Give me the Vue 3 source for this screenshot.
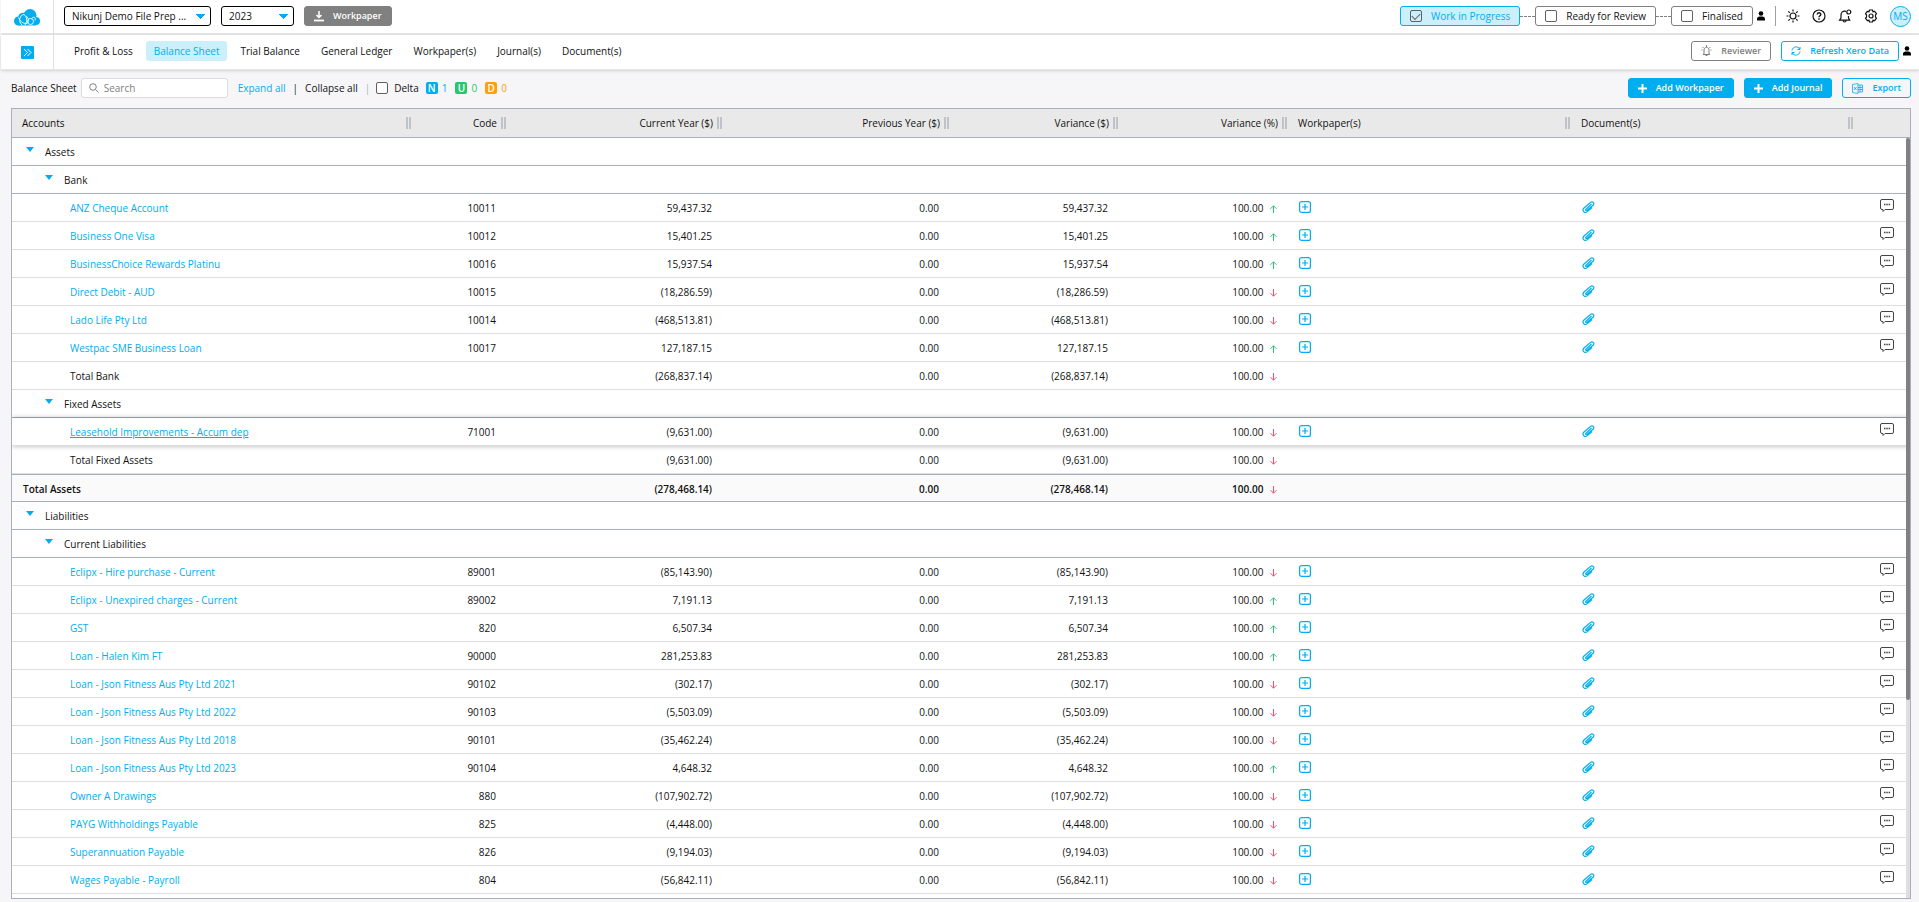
<template>
  <div class="page">
    <header class="bar top-bar">
      <a class="logo" href="#" aria-label="Home">
        <svg width="26" height="17" viewBox="0 0 26 17">
          <circle cx="4.500" cy="12" r="4.500" fill="#00aeef" />
          <circle cx="9" cy="8.500" r="4.800" fill="#00aeef" />
          <circle cx="16" cy="6.500" r="6.500" fill="#00aeef" />
          <circle cx="22" cy="12" r="4" fill="#00aeef" />
          <rect x="4.500" y="8" width="17.500" height="8.500" fill="#00aeef" />
          <g fill="none" stroke="#fff" stroke-width="0.900">
            <path d="M4.500 8.500c1 3 4.500 6.500 8 6 2.500-.5 3-5-.5-7.500" />
            <path d="M8.500 16.500c-5-4-2.500-11 1.500-11 3 2 3.500 7 1 10.500" />
            <circle cx="16.500" cy="12.500" r="3" />
            <path d="M17.500 9.500c2.500-2.500 4.500-1 3.500 2" />
          </g>
        </svg>
      </a>
      <div class="bar-left">
        <select v-model="file" class="picker picker-file" aria-label="File">
          <option>Nikunj Demo File Prep ...</option>
        </select>
        <select v-model="year" class="picker picker-year" aria-label="Year">
          <option>2023</option>
        </select>
        <button class="btn btn-gray" type="button">
          <svg width="10" height="11" viewBox="0 0 10 11" fill="none" stroke="currentColor">
            <path d="M5 0v6M2.500 4L5 6.500 7.500 4" stroke-width="1.500" />
            <path d="M0 9.500h10" stroke-width="1.800" />
          </svg>
          Workpaper
        </button>
      </div>
      <div class="bar-right">
        <div class="steps">
          <template v-for="(step, i) in steps" :key="step.label">
            <span v-if="i" class="dash"></span>
            <label class="step" :class="{ active: step.done }">
              <input v-model="step.done" class="tick" type="checkbox" />
              {{ step.label }}
            </label>
          </template>
        </div>
        <svg class="person" width="8" height="10" viewBox="0 0 8 10">
          <circle cx="4" cy="2.500" r="2.300" />
          <path d="M0 9.500V8c0-2 1.500-2.500 4-2.500S8 6 8 8v1.500z" />
        </svg>
        <div class="tools">
          <button class="icon-btn" type="button" aria-label="Theme">
            <svg width="14" height="14" viewBox="0 0 14 14" fill="none" stroke="currentColor" stroke-width="1.200">
              <circle cx="7" cy="7" r="3" />
              <path d="M7 .5v2M7 11.500v2M.5 7h2M11.500 7h2M2.400 2.400l1.400 1.400M10.200 10.200l1.400 1.400M2.400 11.600l1.400-1.400M10.200 3.800l1.400-1.400" />
            </svg>
          </button>
          <button class="icon-btn" type="button" aria-label="Help">
            <svg width="14" height="14" viewBox="0 0 14 14" fill="none" stroke="currentColor">
              <circle cx="7" cy="7" r="6" stroke-width="1.200" />
              <path d="M5.200 5.600c0-2.400 3.600-2.400 3.600-.1C8.800 6.800 7 6.800 7 8.300M7 9.300v1.500" stroke-width="1.400" />
            </svg>
          </button>
          <button class="icon-btn" type="button" aria-label="Notifications">
            <svg width="14" height="14" viewBox="0 0 14 14" fill="none" stroke="currentColor" stroke-width="1.200">
              <path d="M8 2.300C4.800 1.500 3 3.500 3 6v3l-1.500 2.200h10.200L10.500 9V7M5 11.500c.4 2 2.800 2 3.200 0" />
              <circle cx="10.800" cy="3" r="2" />
            </svg>
          </button>
          <button class="icon-btn" type="button" aria-label="Settings">
            <svg width="14" height="14" viewBox="0 0 14 14" fill="none" stroke="currentColor" stroke-width="1.200">
              <path d="M5.500 1h3l.5 1.700 1.700-.4 1.800 2.400L11.500 6v2l1 1.300-1.800 2.400-1.700-.4L8.500 13h-3L5 11.300l-1.700.4-1.800-2.400 1-1.300V6l-1-1.300 1.800-2.400 1.700.4z" />
              <circle cx="7" cy="7" r="2" />
            </svg>
          </button>
          <button class="avatar" type="button">MS</button>
        </div>
      </div>
    </header>

    <nav class="bar nav-bar">
      <div class="logo">
        <button class="expand" type="button" aria-label="Open menu">
          <svg width="9" height="9" viewBox="0 0 9 9" fill="none" stroke="#fff">
            <path d="M1 1l3.500 3.500L1 8M4.500 1L8 4.500 4.500 8" />
          </svg>
        </button>
      </div>
      <div class="tabs">
        <a v-for="tab in tabs" :key="tab" href="#" class="tab" :class="{ active: tab === 'Balance Sheet' }">{{ tab }}</a>
      </div>
      <div class="bar-right">
        <button class="btn btn-outline-gray" type="button">
          <svg width="11" height="12" viewBox="0 0 11 12" fill="none" stroke="currentColor">
            <path d="M3 9V5c0-3.500 5-3.500 5 0v4l1 .5H2zM4.500 10.500h2M5.500 0v2M.5 5h1M9.500 5h1M1.500 2l1 1M9.500 2l-1 1" />
          </svg>
          Reviewer
        </button>
        <button class="btn btn-outline refresh" type="button">
          <svg width="10" height="10" viewBox="0 0 10 10" fill="none" stroke="currentColor">
            <path d="M1 4.500C1.500.5 7-.5 8.800 3.200M9 1v2.500H6.500M9 5.500C8.500 9.500 3 10.500 1.200 6.800M1 9V6.500h2.500" />
          </svg>
          Refresh Xero Data
        </button>
        <svg class="person" width="8" height="10" viewBox="0 0 8 10">
          <circle cx="4" cy="2.500" r="2.300" />
          <path d="M0 9.500V8c0-2 1.500-2.500 4-2.500S8 6 8 8v1.500z" />
        </svg>
      </div>
    </nav>

    <main class="content">
      <div class="toolbar">
        <h1 class="title">Balance Sheet</h1>
        <label class="search">
          <svg width="10" height="10" viewBox="0 0 10 10" fill="none" stroke="#808080">
            <circle cx="4" cy="4" r="3.300" />
            <path d="M6.500 6.500L9.500 9.500" />
          </svg>
          <input v-model="search" type="text" placeholder="Search" aria-label="Search" />
        </label>
        <div class="links">
          <a class="link" href="#">Expand all</a>
          <span>|</span>
          <a class="dark" href="#">Collapse all</a>
          <span class="pale">|</span>
        </div>
        <label class="delta"><input v-model="delta" class="tick" type="checkbox" />Delta</label>
        <div class="counts">
          <span v-for="c in counts" :key="c.key" class="count" :class="c.cls"><b>{{ c.key }}</b>{{ c.value }}</span>
        </div>
        <div class="actions">
          <button v-for="a in ['Add Workpaper', 'Add Journal']" :key="a" class="btn btn-blue" type="button">
            <svg width="9" height="9" viewBox="0 0 9 9" stroke="currentColor" stroke-width="2">
              <path d="M4.500 0v9M0 4.500h9" />
            </svg>
            {{ a }}
          </button>
          <button class="btn btn-outline" type="button">
            <svg width="11" height="11" viewBox="0 0 11 11" fill="none" stroke="currentColor">
              <path d="M.5 1.500L6 .5v10l-5.500-1zM6 2h4.500v7H6M2 4l2.500 3M4.500 4L2 7M8 2v7M6 4.500h4.500M6 6.500h4.500" stroke-width="0.800" />
            </svg>
            Export
          </button>
        </div>
      </div>

      <div class="grid">
        <div class="scroller">
          <table>
            <colgroup>
              <col v-for="c in columns" :key="c.label" :class="c.col" />
            </colgroup>
            <thead>
              <tr>
                <th v-for="c in columns" :key="c.label" :class="{ num: c.num }" scope="col">
                  {{ c.label }}<i v-if="c.label" class="handle"></i>
                </th>
              </tr>
            </thead>
            <tbody>
              <tr v-for="row in rows" :key="row.name" :class="row.type">
                <td v-if="row.type === 'group' || row.type === 'subgroup'" colspan="9">
                  <button class="toggle" type="button"><i class="caret"></i>{{ row.name }}</button>
                </td>
                <template v-else>
                  <td class="name">
                    <a v-if="row.code" class="link" href="#">{{ row.name }}</a>
                    <template v-else>{{ row.name }}</template>
                  </td>
                  <td class="num">{{ row.code }}</td>
                  <td class="num">{{ row.amount }}</td>
                  <td class="num">0.00</td>
                  <td class="num">{{ row.amount }}</td>
                  <td class="num">
                    100.00
                    <svg class="arrow" :class="{ down: row.down }" width="7" height="8" viewBox="0 0 7 8" fill="none" stroke="currentColor">
                      <path d="M3.500 8V.8M.5 3.800l3-3 3 3" />
                    </svg>
                  </td>
                  <td class="icons">
                    <button v-if="row.code" class="icon-btn blue" type="button" aria-label="Add workpaper">
                      <svg width="12" height="12" viewBox="0 0 12 12" fill="none" stroke="currentColor" stroke-width="1.200">
                        <rect x=".6" y=".6" width="10.800" height="10.800" rx="2" />
                        <path d="M6 3v6M3 6h6" />
                      </svg>
                    </button>
                  </td>
                  <td class="icons">
                    <button v-if="row.code" class="icon-btn blue" type="button" aria-label="Attach document">
                      <svg width="13" height="12" viewBox="0 0 13 12" fill="none" stroke="currentColor" stroke-width="1.200">
                        <path d="M9.500 3L4 8.200c-.8 1 .3 1.800 1.200 1.100L11.300 4c1.800-2-.8-4.200-2.800-2.600L2 7c-2.600 2.700.6 5.700 3.300 3.600L10 6.500" />
                      </svg>
                    </button>
                  </td>
                  <td class="comment">
                    <button v-if="row.code" class="icon-btn" type="button" aria-label="Comments">
                      <svg width="14" height="13" viewBox="0 0 14 13" fill="none" stroke="#444">
                        <path d="M2 .5h10q1.500 0 1.500 1.500v7q0 1.500-1.500 1.500H5L3 12.500v-2H2Q.5 10.500.5 9V2Q.5.5 2 .5z" />
                        <path d="M4 5.500h1.500M6.300 5.500h1.500M8.600 5.500h1.500" stroke-width="1.300" />
                      </svg>
                    </button>
                  </td>
                </template>
              </tr>
            </tbody>
          </table>
        </div>
        <div class="track"><div class="thumb"></div></div>
      </div>
    </main>
  </div>
</template>

<script setup>
import { ref } from 'vue';

const file = ref('Nikunj Demo File Prep ...');
const year = ref('2023');
const search = ref('');
const delta = ref(false);

const steps = ref([
  { label: 'Work in Progress', done: true },
  { label: 'Ready for Review', done: false },
  { label: 'Finalised', done: false },
]);

const tabs = [
  'Profit & Loss',
  'Balance Sheet',
  'Trial Balance',
  'General Ledger',
  'Workpaper(s)',
  'Journal(s)',
  'Document(s)',
];

const counts = [
  { key: 'N', value: 1, cls: 'new' },
  { key: 'U', value: 0, cls: 'updated' },
  { key: 'D', value: 0, cls: 'deleted' },
];

const columns = [
  { label: 'Accounts', col: 'c-name' },
  { label: 'Code', col: 'c-code', num: true },
  { label: 'Current Year ($)', col: 'c-current', num: true },
  { label: 'Previous Year ($)', col: 'c-previous', num: true },
  { label: 'Variance ($)', col: 'c-variance', num: true },
  { label: 'Variance (%)', col: 'c-variance', num: true },
  { label: 'Workpaper(s)', col: 'c-files' },
  { label: 'Document(s)', col: 'c-files' },
  { label: '', col: 'c-comment' },
];

const group = (name) => ({ type: 'group', name });
const subgroup = (name) => ({ type: 'subgroup', name });
const account = (name, code, amount, down, type = 'account') => ({ type, name, code, amount, down });
const total = (name, amount, type = 'total') => ({ type, name, amount, down: true });

const rows = [
  group('Assets'),
  subgroup('Bank'),
  account('ANZ Cheque Account', '10011', '59,437.32', false),
  account('Business One Visa', '10012', '15,401.25', false),
  account('BusinessChoice Rewards Platinu', '10016', '15,937.54', false),
  account('Direct Debit - AUD', '10015', '(18,286.59)', true),
  account('Lado Life Pty Ltd', '10014', '(468,513.81)', true),
  account('Westpac SME Business Loan', '10017', '127,187.15', false),
  total('Total Bank', '(268,837.14)'),
  subgroup('Fixed Assets'),
  account('Leasehold Improvements - Accum dep', '71001', '(9,631.00)', true, 'account hovered'),
  total('Total Fixed Assets', '(9,631.00)'),
  total('Total Assets', '(278,468.14)', 'grand'),
  group('Liabilities'),
  subgroup('Current Liabilities'),
  account('Eclipx - Hire purchase - Current', '89001', '(85,143.90)', true),
  account('Eclipx - Unexpired charges - Current', '89002', '7,191.13', false),
  account('GST', '820', '6,507.34', false),
  account('Loan - Halen Kim FT', '90000', '281,253.83', false),
  account('Loan - Json Fitness Aus Pty Ltd 2021', '90102', '(302.17)', true),
  account('Loan - Json Fitness Aus Pty Ltd 2022', '90103', '(5,503.09)', true),
  account('Loan - Json Fitness Aus Pty Ltd 2018', '90101', '(35,462.24)', true),
  account('Loan - Json Fitness Aus Pty Ltd 2023', '90104', '4,648.32', false),
  account('Owner A Drawings', '880', '(107,902.72)', true),
  account('PAYG Withholdings Payable', '825', '(4,448.00)', true),
  account('Superannuation Payable', '826', '(9,194.03)', true),
  account('Wages Payable - Payroll', '804', '(56,842.11)', true),
];
</script>

<style>
body {
  background: #f6f6f9;
}
</style>

<style scoped>
.page {
  display: flex;
  flex-direction: column;
  height: 100vh;
  font: 10px/14px 'Open Sans', 'Noto Sans', sans-serif;
  color: #111;
}

.page * {
  box-sizing: border-box;
}

button,
input,
select {
  font: inherit;
  color: inherit;
}

button {
  padding: 0;
  border: 0;
  background: none;
  cursor: pointer;
}

a {
  color: inherit;
  text-decoration: none;
}

svg {
  display: block;
  flex: none;
}

.bar {
  display: flex;
  align-items: center;
  flex: none;
  height: 35px;
  margin-left: 1px;
  padding: 0 8px 1px 0;
  background: #fff;
  border-bottom: 2px solid #e6e6e6;
}

.nav-bar {
  padding-bottom: 2px;
  border-bottom-width: 1px;
  box-shadow: 0 1px 3px rgba(0, 0, 0, 0.15);
}

.logo {
  display: flex;
  align-items: center;
  justify-content: center;
  align-self: stretch;
  width: 53px;
  margin-bottom: -2px;
  border-right: 1px solid #e0e0e0;
}

.bar-left {
  display: flex;
  gap: 10px;
  margin-left: 10px;
}

.bar-right {
  display: flex;
  align-items: center;
  margin-left: auto;
}

.picker {
  height: 20px;
  padding: 0 7px;
  border: 1px solid #000;
  border-radius: 3px;
  appearance: none;
  background: #fff conic-gradient(from -45deg at 50% 100%, #00aeef 90deg, transparent 0) no-repeat right 5px center / 9px 5px;
}

.picker-file {
  width: 147px;
}

.picker-year {
  width: 73px;
}

.btn {
  display: flex;
  align-items: center;
  gap: 9px;
  height: 20px;
  padding: 0 9px;
  border: 1px solid currentColor;
  border-radius: 3px;
  font-size: 9px;
  font-weight: 600;
  white-space: nowrap;
}

.btn-gray {
  background: #808080;
  border-color: #808080;
  color: #fff;
}

.btn-blue {
  background: #00aeef;
  border-color: #00aeef;
  color: #fff;
}

.btn-outline {
  color: #00aeef;
}

.btn-outline-gray {
  color: #808080;
}

.refresh {
  margin: 0 4px 0 10px;
}

.steps {
  display: flex;
  align-items: center;
  margin-right: 4px;
}

.step {
  display: flex;
  align-items: center;
  gap: 9px;
  height: 20px;
  padding: 0 9px;
  border: 1px solid #808080;
  border-radius: 3px;
  cursor: pointer;
}

.step.active {
  border-color: #00aeef;
  background: #cceffc;
  color: #00aeef;
}

.dash {
  width: 15px;
  border-top: 1px dashed #808080;
}

.tick {
  display: grid;
  place-items: center;
  width: 12px;
  height: 12px;
  margin: 0;
  appearance: none;
  border: 1px solid #606060;
  border-radius: 2px;
  background: #fff;
}

.tick:checked {
  background: transparent;
}

.tick:checked::before {
  content: '';
  width: 7px;
  height: 4px;
  margin-bottom: 2px;
  border: solid #606060;
  border-width: 0 0 1px 1px;
  transform: rotate(-45deg);
}

.tools {
  display: flex;
  align-items: center;
  gap: 12px;
  height: 20px;
  margin-left: 10px;
  padding-left: 10px;
  border-left: 1px solid #a0a0a0;
}

.avatar {
  width: 21px;
  height: 21px;
  border: 1px solid #00aeef;
  border-radius: 50%;
  background: #cceffc;
  color: #00aeef;
}

.expand {
  display: grid;
  place-items: center;
  width: 13px;
  height: 13px;
  background: #00aeef;
  border-radius: 1px;
}

.tabs {
  display: flex;
  gap: 5px;
  margin-left: 12px;
}

.tab {
  padding: 3px 8px;
  border-radius: 3px;
}

.tab.active {
  background: #cceffc;
  color: #00aeef;
}

.content {
  display: flex;
  flex: 1;
  flex-direction: column;
  min-height: 0;
  padding: 8px 8px 3px 11px;
}

.toolbar {
  display: flex;
  align-items: center;
  flex: none;
  height: 20px;
  margin-bottom: 10px;
}

.title {
  margin: 0 4px 0 0;
  font-size: 10px;
  font-weight: 400;
}

.search {
  display: flex;
  align-items: center;
  gap: 5px;
  width: 147px;
  height: 20px;
  padding: 0 7px;
  border: 1px solid #dcdcdc;
  border-radius: 3px;
  background: #fff;
}

.search input {
  flex: 1;
  min-width: 0;
  padding: 0;
  border: 0;
  outline: 0;
  background: none;
}

.search input::placeholder {
  color: #808080;
}

.links {
  display: flex;
  gap: 7px;
  margin: 0 6px 0 10px;
}

.link {
  color: #00aeef;
}

.pale {
  color: #a9afbe;
}

.delta {
  display: flex;
  align-items: center;
  gap: 6px;
}

.counts {
  display: flex;
  gap: 8px;
  margin-left: 7px;
}

.count {
  display: flex;
  align-items: center;
  gap: 4px;
}

.count b {
  width: 12px;
  height: 12px;
  border-radius: 2px;
  color: #fff;
  font-weight: 600;
  line-height: 12px;
  text-align: center;
}

.new {
  color: #00aeef;
}

.new b {
  background: #00aeef;
}

.updated {
  color: #28c76f;
}

.updated b {
  background: #28c76f;
}

.deleted {
  color: #ff9f0a;
}

.deleted b {
  background: #ff9f0a;
}

.actions {
  display: flex;
  gap: 10px;
  margin-left: auto;
}

.grid {
  position: relative;
  flex: 1;
  min-height: 0;
  border: 1px solid #a9afbe;
  background: #fff;
}

.scroller {
  height: 100%;
  overflow-y: auto;
  scrollbar-width: none;
}

table {
  width: 100%;
  table-layout: fixed;
  border-spacing: 0;
}

.c-name {
  width: 400px;
}

.c-code {
  width: 95px;
}

.c-current {
  width: 216px;
}

.c-previous {
  width: 227px;
}

.c-variance {
  width: 169px;
}

.c-files {
  width: 283px;
}

.c-comment {
  width: 56px;
}

th {
  position: sticky;
  top: 0;
  z-index: 2;
  height: 29px;
  padding: 0 10px 1px;
  background: #e9e9e9;
  border-bottom: 1px solid #a9afbe;
  font-weight: 400;
  text-align: left;
}

.handle {
  position: absolute;
  top: 8px;
  right: 1px;
  width: 5px;
  height: 12px;
  border: solid #bfc2c9;
  border-width: 0 2px;
}

td {
  height: 28px;
  padding: 1px 10px 0;
  border-bottom: 1px solid #dcdee0;
}

.num {
  text-align: right;
}

td.num {
  padding-right: 11px;
}

.group td,
.subgroup td,
.grand td {
  border-bottom-color: #a9afbe;
}

.group td {
  padding-left: 14px;
}

.subgroup td {
  padding-left: 33px;
}

.toggle {
  display: flex;
  align-items: center;
  gap: 11px;
}

.caret {
  margin-bottom: 5px;
  border: solid transparent;
  border-width: 5px 4px 0;
  border-top-color: #00aeef;
}

.account .name,
.total .name {
  padding-left: 58px;
}

.hovered {
  position: relative;
  box-shadow: 0 0 5px rgba(0, 0, 0, 0.3);
}

.hovered .link {
  text-decoration: underline;
}

.grand td {
  padding-top: 2px;
  background: #fafafa;
  border-top: 1px solid #a9afbe;
  font-weight: 600;
}

.grand .name {
  padding-left: 11px;
}

.arrow {
  display: inline-block;
  margin-left: 4px;
  color: #28c76f;
  vertical-align: -1px;
}

.arrow.down {
  color: #f0506e;
  transform: rotate(180deg);
}

td.icons {
  padding: 0 11px 2px;
}

td.comment {
  padding: 0 0 4px 26px;
}

.icon-btn {
  display: block;
}

.blue {
  color: #00aeef;
}

.track {
  position: absolute;
  top: 29px;
  right: 0;
  bottom: 0;
  z-index: 3;
  width: 4px;
  background: #dedede;
}

.thumb {
  height: 74%;
  border-radius: 2px;
  background: #808080;
}
</style>
